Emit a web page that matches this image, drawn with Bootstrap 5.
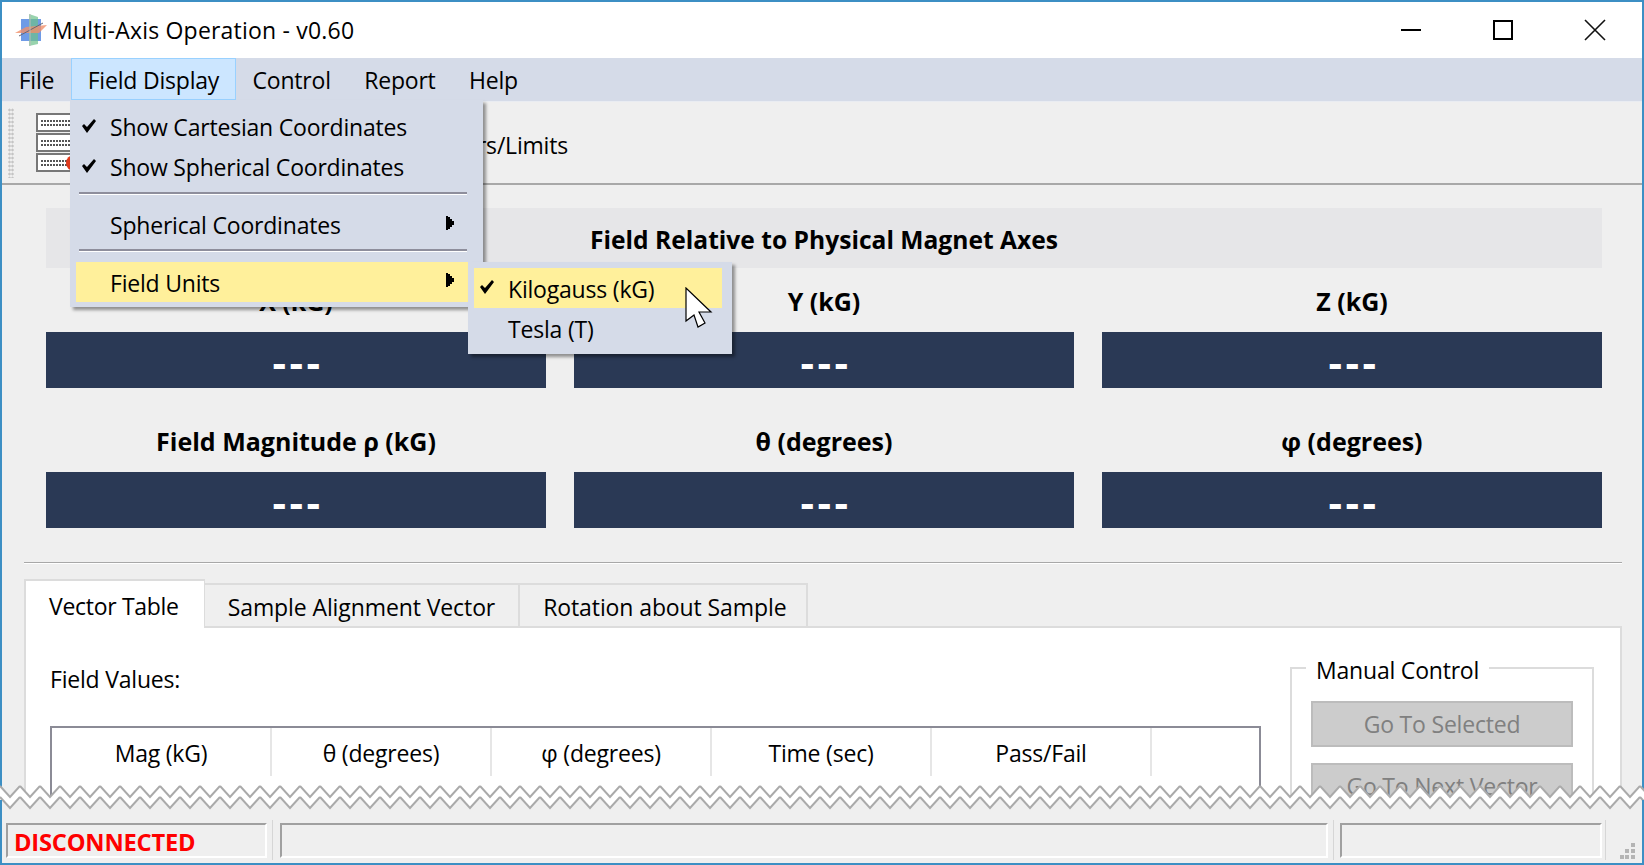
<!DOCTYPE html>
<html lang="en">
<head>
<meta charset="utf-8">
<title>Multi-Axis Operation - v0.60</title>
<link href="https://cdn.jsdelivr.net/npm/bootstrap@5.3.0/dist/css/bootstrap.min.css" rel="stylesheet">
<style>
html,body{margin:0;height:865px;overflow:hidden;background:#efefef}
body{position:relative;width:1644px;font-family:"Open Sans","Noto Sans",sans-serif;font-size:23px;line-height:32px;color:#000;letter-spacing:-.2px}
.appwin{width:1644px;height:865px;border:2px solid #3c8fc4}
.titlebar{height:56px;background:#fff;flex:none;padding-right:1px}
.titletext{letter-spacing:.2px}
.appicon{margin-left:13px;margin-right:5px}
.winbtn{width:92px;height:56px}
.menubar{height:44px;background:#d5dbe8;flex:none;border-bottom:1px solid #e9ecf2}
.menuitem{padding:0 15.7px;height:42px;line-height:42px;border:1px solid transparent}
.menuitem.is-open{background:#cce6ff;border-color:#99d1ff}
.toolstrip{height:83px;background:#efefef;border-bottom:2px solid #a8a8a8;flex:none}
.grip{width:6px;height:70px;margin-left:6px;margin-right:22px;background-image:radial-gradient(#c4c4c4 1px,transparent 1.2px);background-size:3px 4px}
.toollabel{width:472px;text-align:right;margin-top:4px}
.mainarea{flex:1 1 auto;min-height:0;overflow:hidden;background:#efefef;padding:23px 20px 0 22px}
.readings{padding:0 20px 0 22px}
.bandhead{height:60px;line-height:63px;background:#e6e6e8;font-weight:700;font-size:24.6px;letter-spacing:0;text-align:center}
.readgrid{--bs-gutter-x:28px}
.readlabel{font-weight:700;font-size:25px;letter-spacing:0;text-align:center;height:32px;margin-top:17px;margin-bottom:15px}
.readrow2 .readlabel{margin-top:37px}
.readval{height:56px;padding:4px 0 0 4px;line-height:52px;background:#2a3955;color:#fff;font-weight:700;font-size:42px;letter-spacing:3.5px;text-align:center}
.rule{height:2px;background:linear-gradient(#a8a8a8 50%,#fff 50%);margin:34px 0 15px}
.tabstrip{border-bottom:0;height:47px;align-items:flex-end;flex-wrap:nowrap}
.tabstrip .tabbtn{height:43px;line-height:44px;padding:0 23px;background:#efefef;border:2px solid #dcdcdc;border-width:2px 2px 0 0;color:#000;letter-spacing:-.1px}
.tabstrip .tabbtn.is-last{padding-right:20px}
.tabstrip .tabbtn.is-on{height:49px;line-height:50px;background:#fff;border-width:2px 0 0 2px;padding:0 25px 0 23px;border-right:1px solid #dcdcdc;position:relative;z-index:1;margin-bottom:-2px;letter-spacing:-.3px}
.tabbody{border:2px solid #dcdcdc;background:#fff;height:300px;padding:0 27px 0 24px;margin-top:0}
.fieldcap{margin-top:35px;height:32px}
.vectab{width:1211px;height:200px;border:2px solid #8b8b96;border-bottom:0;margin-top:31px}
.vectab .vhead{width:220px;height:48px;line-height:50px;text-align:center;border-right:2px solid #e6e6e6}
.vectab .vhead.vlast{border-right:0;width:auto;flex:1}
.manualbox{width:304px;height:200px;border:2px solid #dcdcdc;margin-top:39px;margin-left:29px;position:relative;padding:32px 19px 0 19px;flex:none}
.manualcap{position:absolute;top:-15px;left:14px;background:#fff;padding:0 10px;height:32px}
.btn.grayout{display:block;width:100%;height:46px;background:#ccc;border:2px solid #bcbcbc;border-radius:0;color:#808080;font-size:23px;line-height:42px;padding:0;margin-bottom:16px;opacity:1;letter-spacing:-.2px}
.statusline{height:54px;background:#efefef;flex:none;padding:14px 0 0 4px}
.statcell{height:35px;border:2px solid;border-color:#a0a0a0 #fff #fff #a0a0a0;line-height:33px;flex:none}
.cellone{width:261px;padding-left:6px;color:#f00;font-weight:700;font-size:23.7px;line-height:35px}
.celltwo{width:1048px}
.cellthree{width:262px}
.statsep{width:1px;height:40px;background:#d6d6d6;margin:-3px 7px 0 5px;flex:none}
.sepmid{margin-right:6px;margin-left:5px}
.seplast{margin-left:3px;margin-right:14px}
.sizegrip{margin:20px 0 0 0;flex:none}
.dropdown-menu.flymenu{display:block;position:absolute;top:100px;left:70px;width:413px;height:207px;background:#d5dbe8;border:0;border-radius:0;padding:0;margin:0;box-shadow:3px 3px 3px rgba(0,0,0,.4);font-size:23px;color:#000}
.dropdown-menu.flysub{top:262px;left:468px;width:264px;height:92px;z-index:1001}
.flyitem{position:relative;height:40px;line-height:40px;padding:0 0 0 34px;color:#000;background:transparent;letter-spacing:-.2px}
.flyitem:hover{color:#000;background:transparent}
.flymenu .flyitem{margin-left:6px;width:392px}
.flymenu .flyitem.hotrow{line-height:42px}
.flysub .flyitem{margin-left:6px;width:248px;line-height:42px}
.flyitem.is-hot,.flyitem.is-hot:hover{background:#fff09b}
.first-item{margin-top:7px}
.first-sub{margin-top:6px}
.flycheck{position:absolute;left:5px;top:11px}
.flyarrow{position:absolute;right:14px;top:11px}
.flyline{height:3px;margin:4px 16px 4px 9px;opacity:1;border:0;background:linear-gradient(#8e8e9c 66%,#fff 66%)}
.lineone{margin-top:5px;margin-bottom:10px}
.linetwo{margin-top:4px;margin-bottom:10px}
.tearstrip{position:absolute;left:0;top:780px;z-index:900}
.arrowcursor{position:absolute;left:685px;top:287px;z-index:1100}
</style>
</head>
<body>
<div class="appwin d-flex flex-column">
  <div class="titlebar d-flex align-items-center">
    <svg class="appicon" width="32" height="32" viewBox="0 0 32 32"><rect x="6" y="5" width="20" height="22" fill="#6f9be6"/><polygon points="14,0 23,3 23,30 14,32" fill="#6cc08a" opacity=".7"/><polygon points="0,19 11,13 32,11 24,19" fill="#f0906a" opacity=".8"/><line x1="4" y1="22" x2="28" y2="9" stroke="#667" stroke-width="1"/><line x1="15" y1="0" x2="15" y2="32" stroke="#bbb" stroke-width="1"/></svg>
    <span class="titletext flex-grow-1">Multi-Axis Operation - v0.60</span>
    <div class="winbtn d-flex align-items-center justify-content-center"><svg width="22" height="22" viewBox="0 0 22 22"><path d="M1 11h20" stroke="#000" stroke-width="2"/></svg></div>
    <div class="winbtn d-flex align-items-center justify-content-center"><svg width="22" height="22" viewBox="0 0 22 22"><rect x="2" y="2" width="18" height="18" fill="none" stroke="#000" stroke-width="2"/></svg></div>
    <div class="winbtn d-flex align-items-center justify-content-center"><svg width="22" height="22" viewBox="0 0 22 22"><path d="M1 1l20 20M21 1L1 21" stroke="#111" stroke-width="1.6"/></svg></div>
  </div>
  <div class="menubar d-flex">
    <div class="menuitem">File</div>
    <div class="menuitem is-open">Field Display</div>
    <div class="menuitem">Control</div>
    <div class="menuitem">Report</div>
    <div class="menuitem">Help</div>
  </div>
  <div class="toolstrip d-flex align-items-center">
    <div class="grip"></div>
    <svg width="60" height="60" viewBox="0 0 60 60" class="flex-none"><g fill="#fff" stroke="#777" stroke-width="2"><rect x="1" y="1" width="50" height="17"/><rect x="1" y="21" width="50" height="17"/><rect x="1" y="41" width="50" height="17"/></g><g stroke="#555" stroke-width="2" stroke-dasharray="2 1"><path d="M5 8h30M5 12h30M5 28h30M5 32h30M5 48h30M5 52h30"/></g><circle cx="38" cy="50" r="8" fill="#e03a1c"/></svg>
    <div class="toollabel">Parameters/Limits</div>
  </div>
  <div class="mainarea">
    <div class="readings">
      <div class="bandhead">Field Relative to Physical Magnet Axes</div>
      <div class="row readgrid">
        <div class="col-4"><div class="readlabel">X (kG)</div><div class="readval">---</div></div>
        <div class="col-4"><div class="readlabel">Y (kG)</div><div class="readval">---</div></div>
        <div class="col-4"><div class="readlabel">Z (kG)</div><div class="readval">---</div></div>
      </div>
      <div class="row readgrid readrow2">
        <div class="col-4"><div class="readlabel">Field Magnitude ρ (kG)</div><div class="readval">---</div></div>
        <div class="col-4"><div class="readlabel">θ (degrees)</div><div class="readval">---</div></div>
        <div class="col-4"><div class="readlabel">φ (degrees)</div><div class="readval">---</div></div>
      </div>
    </div>
    <div class="rule"></div>
    <div class="nav tabstrip d-flex">
      <div class="tabbtn is-on">Vector Table</div>
      <div class="tabbtn">Sample Alignment Vector</div>
      <div class="tabbtn is-last">Rotation about Sample</div>
    </div>
    <div class="tabbody d-flex">
      <div>
        <div class="fieldcap">Field Values:</div>
        <div class="vectab d-flex">
          <div class="vhead">Mag (kG)</div>
          <div class="vhead">θ (degrees)</div>
          <div class="vhead">φ (degrees)</div>
          <div class="vhead">Time (sec)</div>
          <div class="vhead">Pass/Fail</div>
          <div class="vhead vlast"></div>
        </div>
      </div>
      <div class="manualbox">
        <div class="manualcap">Manual Control</div>
        <button class="btn grayout" disabled>Go To Selected</button>
        <button class="btn grayout" disabled>Go To Next Vector</button>
      </div>
    </div>
  </div>
  <div class="statusline d-flex">
    <div class="statcell cellone">DISCONNECTED</div>
    <div class="statsep"></div>
    <div class="statcell celltwo"></div>
    <div class="statsep sepmid"></div>
    <div class="statcell cellthree"></div>
    <div class="statsep seplast"></div>
    <svg class="sizegrip" width="16" height="16" viewBox="0 0 16 16" fill="#b4b4b4"><rect x="11" y="0" width="4" height="4"/><rect x="5" y="6" width="4" height="4"/><rect x="11" y="6" width="4" height="4"/><rect x="0" y="12" width="4" height="4"/><rect x="5" y="12" width="4" height="4"/><rect x="11" y="12" width="4" height="4"/></svg>
  </div>
</div>

<svg class="tearstrip" width="1644" height="30" viewBox="0 0 1644 30">
  <defs>
    <pattern id="tearcell" width="20" height="30" patternUnits="userSpaceOnUse">
      <polygon points="0,6 10,17 20,6 20,17 10,28 0,17" fill="#fff"/>
      <polygon points="0,17 10,28 20,17 20,30 0,30" fill="#efefef"/>
      <polyline points="0,6 10,17 20,6" fill="none" stroke="#aaa" stroke-width="2"/>
      <polyline points="0,17 10,28 20,17" fill="none" stroke="#aaa" stroke-width="2"/>
    </pattern>
  </defs>
  <rect width="1644" height="30" fill="url(#tearcell)"/>
  <rect x="0" y="20" width="2" height="10" fill="#3c8fc4"/>
  <rect x="1642" y="20" width="2" height="10" fill="#3c8fc4"/>
</svg>

<div class="dropdown-menu show flymenu">
  <div class="dropdown-item flyitem first-item"><svg class="flycheck" width="16" height="16" viewBox="0 0 16 16"><path d="M1 8l2-2 3 3 7-8 2 2-9 12z" fill="#000"/></svg>Show Cartesian Coordinates</div>
  <div class="dropdown-item flyitem"><svg class="flycheck" width="16" height="16" viewBox="0 0 16 16"><path d="M1 8l2-2 3 3 7-8 2 2-9 12z" fill="#000"/></svg>Show Spherical Coordinates</div>
  <hr class="flyline lineone">
  <div class="dropdown-item flyitem">Spherical Coordinates<svg class="flyarrow" width="8" height="14" viewBox="0 0 8 14"><path d="M0 0h2v1h2v2h2v2h2v4h-2v2h-2v2h-2v1h-2z" fill="#000"/></svg></div>
  <hr class="flyline linetwo">
  <div class="dropdown-item flyitem is-hot hotrow">Field Units<svg class="flyarrow" width="8" height="14" viewBox="0 0 8 14"><path d="M0 0h2v1h2v2h2v2h2v4h-2v2h-2v2h-2v1h-2z" fill="#000"/></svg></div>
</div>
<div class="dropdown-menu show flymenu flysub">
  <div class="dropdown-item flyitem is-hot first-sub"><svg class="flycheck" width="16" height="16" viewBox="0 0 16 16"><path d="M1 8l2-2 3 3 7-8 2 2-9 12z" fill="#000"/></svg>Kilogauss (kG)</div>
  <div class="dropdown-item flyitem">Tesla (T)</div>
</div>
<svg class="arrowcursor" width="28" height="42" viewBox="0 0 28 42"><path d="M1 1V34L9 28L13 40L20 36L14 25H26Z" fill="#fff" stroke="#000" stroke-width="1.2"/></svg>
<script src="https://cdn.jsdelivr.net/npm/bootstrap@5.3.0/dist/js/bootstrap.bundle.min.js"></script>
</body>
</html>
